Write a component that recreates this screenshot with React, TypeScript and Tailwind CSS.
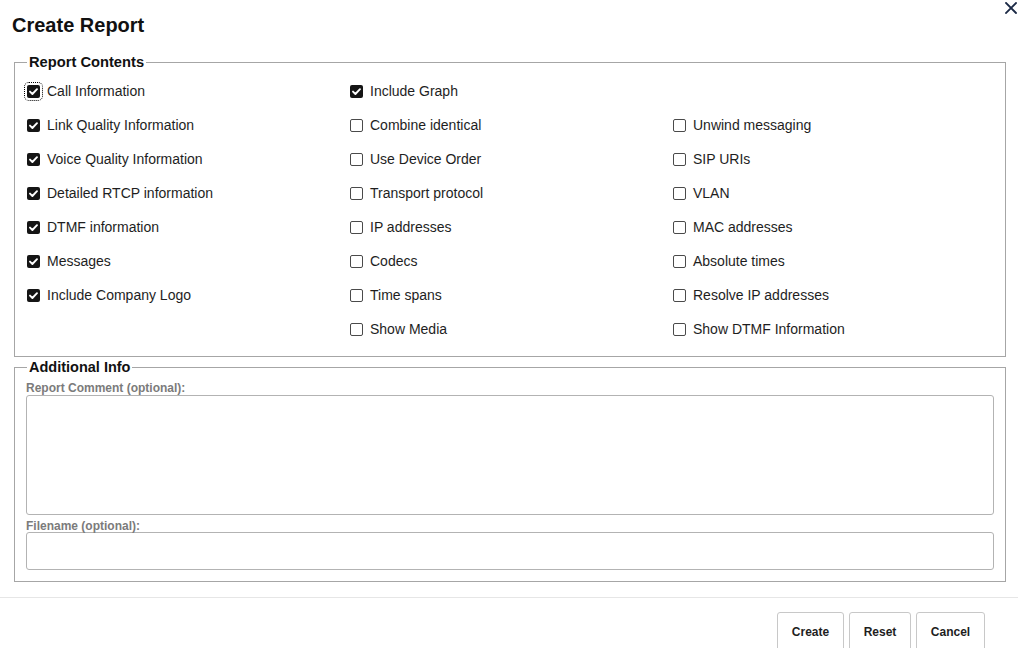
import React from "react";

type Item = { label: string; checked: boolean; focus?: boolean } | null;

const col1: Item[] = [
  { label: "Call Information", checked: true, focus: true },
  { label: "Link Quality Information", checked: true },
  { label: "Voice Quality Information", checked: true },
  { label: "Detailed RTCP information", checked: true },
  { label: "DTMF information", checked: true },
  { label: "Messages", checked: true },
  { label: "Include Company Logo", checked: true },
  null,
];
const col2: Item[] = [
  { label: "Include Graph", checked: true },
  { label: "Combine identical", checked: false },
  { label: "Use Device Order", checked: false },
  { label: "Transport protocol", checked: false },
  { label: "IP addresses", checked: false },
  { label: "Codecs", checked: false },
  { label: "Time spans", checked: false },
  { label: "Show Media", checked: false },
];
const col3: Item[] = [
  null,
  { label: "Unwind messaging", checked: false },
  { label: "SIP URIs", checked: false },
  { label: "VLAN", checked: false },
  { label: "MAC addresses", checked: false },
  { label: "Absolute times", checked: false },
  { label: "Resolve IP addresses", checked: false },
  { label: "Show DTMF Information", checked: false },
];

function Box({ checked, focus }: { checked: boolean; focus?: boolean }) {
  return (
    <span
      className={
        "flex h-[13px] w-[13px] shrink-0 items-center justify-center rounded-[2px] " +
        (checked ? "bg-[#151515] " : "border border-[#4a4a4a] bg-white ") +
        (focus ? "outline outline-1 outline-dotted outline-black outline-offset-[2px]" : "")
      }
    >
      {checked && (
        <svg width="13" height="13" viewBox="0 0 13 13">
          <path d="M3 6.6 L5.4 9 L10 4.2" fill="none" stroke="#fff" strokeWidth="1.9" strokeLinecap="round" strokeLinejoin="round" />
        </svg>
      )}
    </span>
  );
}

function Cell({ item }: { item: Item }) {
  if (!item) return <div className="h-[34px]" />;
  return (
    <label className="flex h-[34px] items-center gap-[7px] text-[14px] text-[#1e1e1e]">
      <Box checked={item.checked} focus={item.focus} />
      <span>{item.label}</span>
    </label>
  );
}

const buttons = [
  { label: "Create", w: "w-[67px]" },
  { label: "Reset", w: "w-[62px]" },
  { label: "Cancel", w: "w-[69px]" },
];

export default function App() {
  const rows = col1.map((_, i) => [col1[i], col2[i], col3[i]]);
  return (
    <div className="h-[648px] w-[1018px] overflow-hidden bg-white" style={{ fontFamily: '"Liberation Sans", Arial, sans-serif' }}>
      <div className="flex h-[53px] items-start justify-between pl-[12px] pr-[1px]">
        <h1 className="mt-[13px] text-[20px] font-bold leading-[24px] text-[#111]">Create Report</h1>
        <button className="mt-[2px] flex h-[12px] w-[12px] items-center justify-center">
          <svg width="12" height="12" viewBox="0 0 12 12">
            <path d="M1 1 L11 11 M11 1 L1 11" stroke="#1b2945" strokeWidth="1.8" strokeLinecap="square" />
          </svg>
        </button>
      </div>

      <fieldset className="ml-[14px] mr-[12px] border border-[#a6a6a6] px-[12px] pb-[10px]">
        <legend className="px-[2px] text-[14.7px] font-bold leading-[18px] text-[#111]">Report Contents</legend>
        <div className="mt-[3px] grid grid-cols-[323px_323px_1fr]">
          {rows.map((r, i) => (
            <React.Fragment key={i}>
              <Cell item={r[0]} />
              <Cell item={r[1]} />
              <Cell item={r[2]} />
            </React.Fragment>
          ))}
        </div>
      </fieldset>

      <fieldset className="ml-[14px] mr-[12px] mt-[1px] border border-[#a6a6a6] px-[11px] pb-[11px]">
        <legend className="ml-[1px] px-[2px] text-[14.5px] font-bold leading-[18px] text-[#111]">Additional Info</legend>
        <div className="mt-[4px] h-[14px] text-[12px] font-bold leading-[16px] text-[#7b7b7b]">Report Comment (optional):</div>
        <textarea className="mt-[1px] block h-[120px] w-full resize-none rounded-[3px] border border-[#b3b3b3] bg-white outline-none" />
        <div className="mt-[3px] h-[14px] text-[12px] font-bold leading-[16px] text-[#7b7b7b]">Filename (optional):</div>
        <input className="block h-[38px] w-full rounded-[3px] border border-[#b3b3b3] bg-white outline-none" />
      </fieldset>

      <div className="mt-[15px] flex justify-end gap-[5px] border-t border-[#e6e6e6] pr-[33px] pt-[14px]">
        {buttons.map((b) => (
          <button
            key={b.label}
            className={
              "h-[40px] rounded-t-[3px] border border-[#c8c8c8] bg-white pb-[1px] text-center text-[12px] font-bold text-[#1e1e1e] " +
              b.w
            }
          >
            {b.label}
          </button>
        ))}
      </div>
    </div>
  );
}
